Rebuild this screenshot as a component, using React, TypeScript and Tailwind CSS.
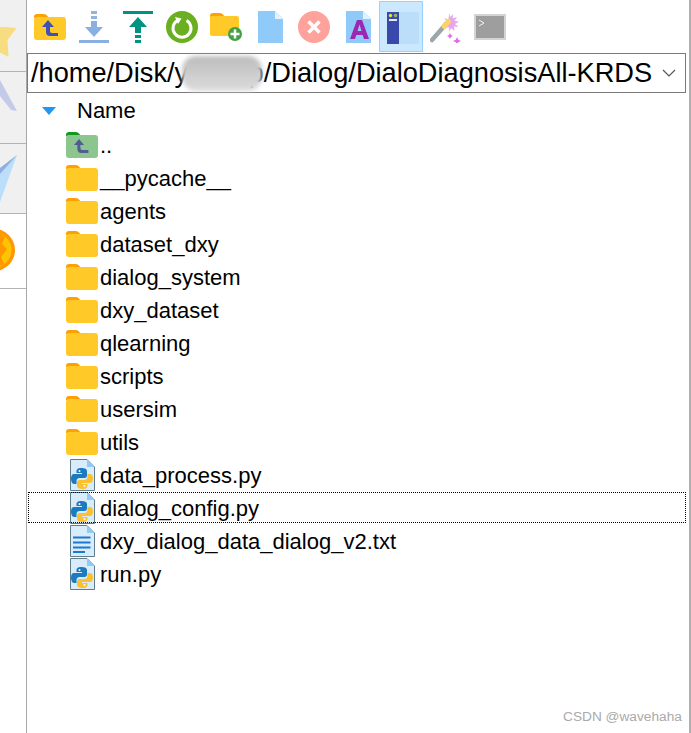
import React from 'react';

type IconProps = { className?: string };

function FolderIcon({ tab = '#ff9f00', body = '#ffca28' }: { tab?: string; body?: string }) {
  return (
    <svg width="32" height="26" viewBox="0 0 32 26">
      <path d="M0 3a3 3 0 0 1 3-3h7a4 4 0 0 1 3 1.500L15 4H0z" fill={tab} />
      <rect x="0" y="3" width="32" height="23" rx="3" fill={body} />
    </svg>
  );
}

function UpFolderRow() {
  return (
    <svg width="32" height="26" viewBox="0 0 32 26">
      <path d="M0 3a3 3 0 0 1 3-3h7a4 4 0 0 1 3 1.500L15 4H0z" fill="#0e9a1e" />
      <rect x="0" y="3" width="32" height="23" rx="3" fill="#8cc58d" />
      <path d="M13 7l-5 6h3.400v4a4 4 0 0 0 4 4h7v-3h-6a2 2 0 0 1-2-2v-3h3.600z" fill="#515c94" />
    </svg>
  );
}

function PythonFile() {
  return (
    <svg width="25" height="32" viewBox="0 0 25 32">
      <path d="M.5.500H17L24.500 8v23.500H.5z" fill="#d9ecfb" stroke="#607d8b" />
      <path d="M17 .5L24.500 8H17z" fill="#90caf9" />
      <g transform="translate(-0.5 2)">
        <path d="M12 7c-4 0-5 1.500-5 3v2h5.500v1H4.500C2.500 13 1.500 15 1.500 17.500S2.500 23 4.500 23H7v-3c0-2 1.500-3 3-3h5c1.500 0 2.500-1 2.500-2.500V10c0-2-2-3-5.500-3z" fill="#1b7ac0" />
        <path d="M13 28c4 0 5-1.500 5-3v-2h-5.500v-1h8c2 0 3-2 3-4.500S22.500 13 20.500 13H18v3c0 2-1.500 3-3 3h-5c-1.500 0-2.500 1-2.500 2.500V25c0 2 2 3 5.500 3z" fill="#fbc02d" />
        <circle cx="10" cy="10" r="1" fill="#fff" />
        <circle cx="15" cy="25" r="1" fill="#fff" />
      </g>
    </svg>
  );
}

function TextFile() {
  return (
    <svg width="25" height="32" viewBox="0 0 25 32">
      <path d="M.5.500H17L24.500 8v23.500H.5z" fill="#d9ecfb" stroke="#607d8b" />
      <path d="M17 .5L24.500 8H17z" fill="#90caf9" />
      <path d="M3 12.500h17.500M3 17.500h17.500M3 22.500h17.500M3 27h12" stroke="#1e78d2" strokeWidth="1.800" />
    </svg>
  );
}

function ToolUp() {
  return (
    <svg width="32" height="26" viewBox="0 0 32 26">
      <path d="M0 3a3 3 0 0 1 3-3h7a4 4 0 0 1 3 1.500L15 4H0z" fill="#ff9f00" />
      <rect x="0" y="3" width="32" height="23" rx="3" fill="#ffca28" />
      <path d="M14 6l-6 7h4v5a4 4 0 0 0 4 4h8v-3h-6a2 2 0 0 1-2-2v-4h4z" fill="#3f51b5" />
    </svg>
  );
}

function ToolDown() {
  return (
    <svg width="30" height="32" viewBox="0 0 30 32">
      <path d="M12 0h6v3h-6zM12 5h6v3h-6z" fill="#90b4e4" />
      <path d="M12 10h6v6h6l-9 10-9-10h6z" fill="#8ab0e3" />
      <rect x="0" y="29" width="30" height="3" fill="#8ab0e3" />
    </svg>
  );
}

function ToolTop() {
  return (
    <svg width="30" height="32" viewBox="0 0 30 32">
      <rect x="0" y="0" width="30" height="3" fill="#00937f" />
      <path d="M15 6l9 10h-6v6h-6v-6H6z" fill="#00937f" />
      <path d="M12 24h6v3h-6zM12 29h6v3h-6z" fill="#00937f" />
    </svg>
  );
}

function ToolRefresh() {
  return (
    <svg width="32" height="32" viewBox="0 0 32 32">
      <circle cx="16" cy="16" r="16" fill="#6aaf1f" />
      <path d="M11.500 9.500a9 9 0 1 0 9 0" fill="none" stroke="#fff" strokeWidth="3" />
      <path d="M9 6l6.500 1.500L12 13z" fill="#fff" />
    </svg>
  );
}

function ToolNewFolder() {
  return (
    <svg width="32" height="28" viewBox="0 0 32 28">
      <path d="M0 3a3 3 0 0 1 3-3h7a4 4 0 0 1 3 1.500L15 4H0z" fill="#ff9f00" />
      <rect x="0" y="3" width="29" height="20" rx="2" fill="#ffca28" />
      <circle cx="25" cy="21" r="7" fill="#43a047" />
      <path d="M25 16.500v9M20.500 21h9" stroke="#fff" strokeWidth="2.500" />
    </svg>
  );
}

function ToolFile() {
  return (
    <svg width="25" height="32" viewBox="0 0 25 32">
      <path d="M0 0h17l8 8v24H0z" fill="#90caf9" />
      <path d="M17 0l8 8h-8z" fill="#e3f2fd" />
    </svg>
  );
}

function ToolDelete() {
  return (
    <svg width="32" height="32" viewBox="0 0 32 32">
      <circle cx="16" cy="16" r="16" fill="#ffa29b" />
      <path d="M10.500 10.500l11 11M21.500 10.500l-11 11" stroke="#fff" strokeWidth="3.500" />
    </svg>
  );
}

function ToolRename() {
  return (
    <svg width="25" height="32" viewBox="0 0 25 32">
      <path d="M0 0h17l8 8v24H0z" fill="#90caf9" />
      <path d="M17 0l8 8h-8z" fill="#e3f2fd" />
      <path d="M11 9h5l7 19h-5l-1.300-4H10.300L9 28H4zM11.500 20h4l-2-6.500z" fill="#9c27b0" fillRule="evenodd" />
    </svg>
  );
}

function ToolPanel() {
  return (
    <svg width="32" height="32" viewBox="0 0 32 32">
      <rect x="0" y="0" width="32" height="32" fill="#bbdefb" />
      <rect x="0" y="0" width="12" height="32" fill="#3949ab" />
      <circle cx="3.500" cy="3.500" r="1.700" fill="#fdd835" />
      <circle cx="8.500" cy="3.500" r="1.700" fill="#8bc34a" />
      <rect x="2" y="7" width="8" height="2" fill="#e3e8f7" />
    </svg>
  );
}

function ToolWand() {
  return (
    <svg width="32" height="32" viewBox="0 0 32 32">
      <path d="M19 2l1.300 4 3-3-.7 4.500 4.400-1.500-2.500 4 4.500.5-4 2.500 3.500 3-4.500-.5.5 4.500-3.500-3-1.500 3.500-1-4.500-4 1.500 2-4-4-1.500 4.500-1-2.500-4 4 2z" fill="#e9a5f0" />
      <path d="M2 29L17 12" stroke="#9aa6ab" strokeWidth="4.500" strokeLinecap="round" />
      <path d="M14 15.500l4.500-5" stroke="#fbd36a" strokeWidth="5" strokeLinecap="round" />
      <path d="M20 22l1 2 2 1-2 1-1 2-1-2-2-1 2-1zM27 26l1.200 2.800L31 30l-2.800 1.200L27 34l-1.200-2.800L23 30l2.800-1.200z" fill="#e26be8" />
    </svg>
  );
}

function ToolTerminal() {
  return (
    <svg width="32" height="26" viewBox="0 0 32 26">
      <rect x="1" y="1" width="30" height="24" fill="#9e9e9e" stroke="#d4d4d4" strokeWidth="2" />
      <path d="M5 6l5 3-5 3" fill="none" stroke="#f2f2f2" strokeWidth="1" />
    </svg>
  );
}

function Star({ className }: IconProps) {
  return (
    <svg className={className} width="26" height="71" viewBox="0 0 26 71">
      <path d="M-12 27h17l11.500 1-9 12 1 17-15-8z" fill="#f7dd80" />
    </svg>
  );
}

function Pen() {
  return (
    <svg width="26" height="72" viewBox="0 0 26 72">
      <path d="M0 8l17 31-6-1L0 24z" fill="#c5cae9" />
    </svg>
  );
}

function Plane() {
  return (
    <svg width="26" height="70" viewBox="0 0 26 70">
      <path d="M17 11L0 58V24z" fill="#bbdefb" />
      <path d="M17 11L0 24v6z" fill="#90aee0" />
    </svg>
  );
}

function OrangeBall() {
  return (
    <svg width="26" height="74" viewBox="0 0 26 74">
      <circle cx="-6" cy="36" r="21" fill="#ff9800" />
      <circle cx="-6" cy="36" r="17.500" fill="#ffc400" />
      <path d="M-2 17l7 6-3 7 5 5-6 8 3 7-8 4-5-12z" fill="#ff9800" />
    </svg>
  );
}

const tools = [
  { id: 'up', node: <ToolUp /> },
  { id: 'down', node: <ToolDown /> },
  { id: 'top', node: <ToolTop /> },
  { id: 'refresh', node: <ToolRefresh /> },
  { id: 'new', node: <ToolNewFolder /> },
  { id: 'file', node: <ToolFile /> },
  { id: 'delete', node: <ToolDelete /> },
  { id: 'rename', node: <ToolRename /> },
  { id: 'panel', node: <ToolPanel />, active: true },
  { id: 'wand', node: <ToolWand /> },
  { id: 'terminal', node: <ToolTerminal /> },
];

const files = [
  { name: '..', icon: <UpFolderRow /> },
  { name: '__pycache__', icon: <FolderIcon /> },
  { name: 'agents', icon: <FolderIcon /> },
  { name: 'dataset_dxy', icon: <FolderIcon /> },
  { name: 'dialog_system', icon: <FolderIcon /> },
  { name: 'dxy_dataset', icon: <FolderIcon /> },
  { name: 'qlearning', icon: <FolderIcon /> },
  { name: 'scripts', icon: <FolderIcon /> },
  { name: 'usersim', icon: <FolderIcon /> },
  { name: 'utils', icon: <FolderIcon /> },
  { name: 'data_process.py', icon: <PythonFile /> },
  { name: 'dialog_config.py', icon: <PythonFile />, focused: true },
  { name: 'dxy_dialog_data_dialog_v2.txt', icon: <TextFile /> },
  { name: 'run.py', icon: <PythonFile /> },
];

export default function App() {
  return (
    <div className="relative flex h-[733px] w-[691px] overflow-hidden bg-white font-['Liberation_Sans',sans-serif] text-black">
      {/* left dock, icons are cut off by the window edge */}
      <div className="flex w-[27px] shrink-0 flex-col border-r border-[#a8a8a8]">
        <div className="h-[72px] border-b border-[#b4b4b4] bg-[#f0f0f0]"><Star /></div>
        <div className="h-[72px] border-b border-[#b4b4b4] bg-[#f0f0f0]"><Pen /></div>
        <div className="h-[70px] border-b border-[#b4b4b4] bg-[#f0f0f0]"><Plane /></div>
        <div className="h-[74px]"><OrangeBall /></div>
        <div className="flex-1 border-t border-[#b4b4b4]" />
      </div>

      <div className="flex min-w-0 flex-1 flex-col">
        <div className="flex h-[53px] items-center pb-[1px] pl-[1px] pt-[1px]">
          {tools.map((t) => (
            <div
              key={t.id}
              className={
                t.active
                  ? '-ml-[1px] mr-[1px] flex h-[51px] w-[44px] items-center justify-center border border-[#99d1ff] bg-[#cce8ff] pl-[4px] pt-[2px]'
                  : 'flex h-[51px] w-[44px] items-center justify-center'
              }
            >
              {t.node}
            </div>
          ))}
        </div>

        <div className="relative flex h-[40px] w-[659px] items-center justify-between border border-[#7a7a7a] pl-[3px] pr-[9px]">
          <span className="whitespace-nowrap text-[27.2px] leading-none">/home/Disk/yaaaap/Dialog/DialoDiagnosisAll-KRDS</span>
          <svg width="14" height="8" viewBox="0 0 14 8">
            <path d="M1 1l6 6 6-6" fill="none" stroke="#555" strokeWidth="1.200" />
          </svg>
          {/* blurred out part of the path */}
          <div className="absolute left-[154px] top-[2px] h-[35px] w-[80px] rounded-[14px] bg-gradient-to-b from-[#bdbdbd] to-[#dcdcdc] blur-[2px]" />
        </div>

        <div className="flex h-[35px] items-center pl-[15px]">
          <svg width="14" height="8" viewBox="0 0 14 8">
            <path d="M0 0h14L7 8z" fill="#2196f3" />
          </svg>
          <span className="ml-[21px] pt-[1px] text-[22px] leading-none">Name</span>
        </div>

        <div className="flex flex-col">
          {files.map((f) => (
            <div key={f.name} className="relative flex h-[33px] w-[659px] items-center">
              <div className="ml-[39px] flex w-[32px] shrink-0 justify-center">{f.icon}</div>
              <span className="ml-[2px] whitespace-nowrap pt-[2px] text-[22px] leading-none">{f.name}</span>
              {f.focused && (
                <div className="absolute left-[1px] right-0 top-[1px] h-[31px] border border-dotted border-black" />
              )}
            </div>
          ))}
        </div>
      </div>

      <div className="w-[2px] shrink-0 bg-[#b0b0b0]" />

      <span className="absolute bottom-[5px] left-[563px] text-[13.7px] text-[#aaaaaa]">CSDN @wavehaha</span>
    </div>
  );
}
